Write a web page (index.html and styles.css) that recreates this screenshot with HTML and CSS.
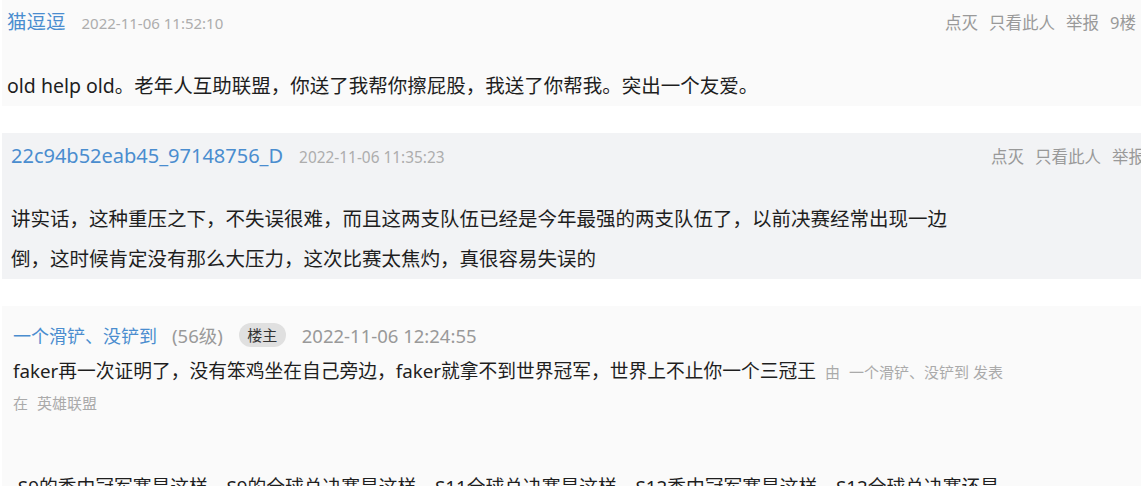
FILE: index.html
```html
<!DOCTYPE html>
<html lang="zh-CN">
<head>
  <meta charset="UTF-8" />
  <meta name="viewport" content="width=device-width, initial-scale=1.0" />
  <title>帖子回复</title>
  <link rel="stylesheet" href="styles.css">
</head>
<body>
  <div class="thread">
    <div class="post">
      <div class="post-head">
        <a class="user">猫逗逗</a>
        <span class="time">2022-11-06 11:52:10</span>
        <div class="ops">
          <span>点灭</span>
          <span>只看此人</span>
          <span>举报</span>
          <span>9楼</span>
        </div>
      </div>
      <div class="post-body">old help old。老年人互助联盟，你送了我帮你擦屁股，我送了你帮我。突出一个友爱。</div>
    </div>

    <div class="post post-alt">
      <div class="post-head">
        <a class="user">22c94b52eab45_97148756_D</a>
        <span class="time">2022-11-06 11:35:23</span>
        <div class="ops">
          <span>点灭</span>
          <span>只看此人</span>
          <span>举报</span>
        </div>
      </div>
      <div class="post-body">讲实话，这种重压之下，不失误很难，而且这两支队伍已经是今年最强的两支队伍了，以前决赛经常出现一边<br>倒，这时候肯定没有那么大压力，这次比赛太焦灼，真很容易失误的</div>
    </div>

    <div class="origin">
      <div class="origin-head">
        <a class="user">一个滑铲、没铲到</a>
        <span class="level">(56级)</span>
        <span class="badge">楼主</span>
        <span class="origin-time">2022-11-06 12:24:55</span>
      </div>
      <div class="origin-body">
        faker再一次证明了，没有笨鸡坐在自己旁边，faker就拿不到世界冠军，世界上不止你一个三冠王
        <span class="from"><span class="gap">由</span><span class="gap-s">一个滑铲、没铲到</span>发表</span><br>
        <span class="from"><span class="gap">在</span>英雄联盟</span>
      </div>
      <div class="origin-more">&nbsp;S9的季中冠军赛是这样，S9的全球总决赛是这样，S11全球总决赛是这样，S12季中冠军赛是这样，S12全球总决赛还是</div>
    </div>
  </div>
</body>
</html>
```

FILE: styles.css
```css
* { box-sizing: border-box; }
html, body {
  margin: 0;
  padding: 0;
  background: #fff;
  overflow: hidden;
}
body {
  font-family: "Noto Sans", "Noto Sans CJK SC", sans-serif;
  color: #1e1e1e;
}
.thread {
  display: flex;
  flex-direction: column;
  gap: 27px;
  padding-left: 2px;
}
.post {
  background: #fafafa;
  padding: 8px 5px 0 5px;
}
.post-alt {
  background: #f2f3f5;
  padding: 9px 0 0 9px;
  width: calc(100% + 4px);
}
.post-head {
  display: flex;
  align-items: baseline;
  height: 28px;
  line-height: 28px;
}
.user {
  color: #4a8dcf;
  font-size: 19.5px;
  text-decoration: none;
  cursor: pointer;
}
.post-alt .user {
  font-size: 20px;
}
.time {
  margin-left: 16px;
  color: #adadad;
  font-size: 15px;
}
.post-alt .time {
  font-size: 15.4px;
}
.ops {
  margin-left: auto;
  display: flex;
  gap: 11px;
  color: #999;
  font-size: 16.5px;
}
.post-body {
  margin-top: 30px;
  font-size: 19.5px;
  line-height: 40px;
}
.post-alt .post-body {
  margin-top: 29px;
}
.origin {
  background: #fafafa;
  padding: 15px 11px 0 11px;
  height: 200px;
}
.origin-head {
  display: flex;
  align-items: center;
  height: 28px;
}
.origin-head .user {
  font-size: 18px;
}
.level {
  margin-left: 15px;
  color: #999;
  font-size: 18.5px;
}
.badge {
  margin-left: 16px;
  width: 47px;
  height: 24px;
  line-height: 24px;
  border-radius: 12px;
  background: #e0e0e0;
  color: #333;
  font-size: 15px;
  text-align: center;
}
.origin-time {
  margin-left: 16px;
  color: #999;
  font-size: 18.5px;
}
.origin-body {
  margin-top: 7px;
  font-size: 18.75px;
  line-height: 30px;
}
.from {
  color: #aaa;
  font-size: 15px;
  margin-left: 4px;
}
.origin-body .from:last-child {
  margin-left: 0;
}
.gap { margin-right: 9px; }
.gap-s { margin-right: 4px; }
.origin-more {
  margin-top: 54px;
  font-size: 18.75px;
  line-height: 30px;
}
```
